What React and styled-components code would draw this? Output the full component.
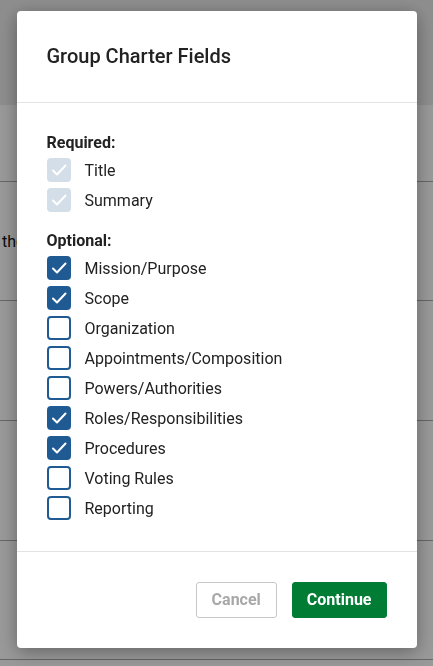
import styled, { createGlobalStyle } from 'styled-components'

const GlobalStyle = createGlobalStyle`
	html, body {
		margin: 0;
		padding: 0;
		font-family: Roboto, "Liberation Sans", sans-serif;
		color: #222;
		background: #fff;
	}
`

const Page = styled.div`
	height: 666px;
	overflow: hidden;
`
const TopBar = styled.div`
	height: 105px;
	background-color: #ececec;
`
const Row = styled.div`
	height: ${(p) => p.$height}px;
	border-bottom: 1px solid #aaa;
	display: flex;
	align-items: center;
	padding-left: 2px;
	font-size: 16px;
	color: #111;
`

const Overlay = styled.div`
	position: fixed;
	inset: 0;
	background-color: rgba(0, 0, 0, 0.4);
	display: flex;
	justify-content: center;
	align-items: flex-start;
	padding-top: 11px;
`
const Modal = styled.div`
	width: 400px;
	background: #fff;
	border-radius: 4px;
	box-shadow: 0 4px 18px rgba(0, 0, 0, 0.35);
`
const Header = styled.div`
	height: 92px;
	display: flex;
	align-items: center;
	padding: 0 30px;
	border-bottom: 1px solid #e3e3e3;
	box-sizing: border-box;
`
const Title = styled.h2`
	margin: 0 0 2px;
	font-size: 20px;
	font-weight: 500;
	color: #222;
`
const Body = styled.div`
	padding: 30px 30px 28px;
	border-bottom: 1px solid #e3e3e3;
`
const GroupLabel = styled.div`
	font-size: 16px;
	font-weight: 700;
	line-height: 20px;
	margin-top: ${(p) => (p.$first ? 0 : 16)}px;
	margin-bottom: 2px;
`
const Option = styled.label`
	display: flex;
	align-items: center;
	gap: 14px;
	height: 30px;
	font-size: 16px;
	color: #222;
`
const Box = styled.span`
	width: 24px;
	height: 24px;
	box-sizing: border-box;
	border-radius: 4px;
	display: flex;
	align-items: center;
	justify-content: center;
	background-color: ${(p) => (p.$disabled ? '#d3dee8' : p.$checked ? '#1f5a93' : '#fff')};
	border: 2px solid ${(p) => (p.$disabled ? '#d3dee8' : '#1f5a93')};
`
const Footer = styled.div`
	height: 96px;
	display: flex;
	justify-content: flex-end;
	align-items: center;
	gap: 15px;
	padding: 0 30px 1px;
	box-sizing: border-box;
`
const Button = styled.button`
	height: 36px;
	padding: 0 ${(p) => (p.$primary ? 14 : 15)}px;
	border-radius: 3px;
	font-family: Roboto, "Liberation Sans", sans-serif;
	font-size: 16px;
	font-weight: 700;
	border: 1px solid ${(p) => (p.$primary ? '#007c34' : '#c8c8c8')};
	background: ${(p) => (p.$primary ? '#007c34' : '#fff')};
	color: ${(p) => (p.$primary ? '#fff' : '#a8a8a8')};
`

const Check = () => (
	<svg width="18" height="18" viewBox="0 0 18 18" fill="none">
		<polyline points="3,9.5 7,13.5 15.5,4.5" stroke="#fff" strokeWidth="2" strokeLinecap="round" strokeLinejoin="round" />
	</svg>
)

const Checkbox = ({ label, checked, disabled }) => (
	<Option>
		<Box $checked={checked} $disabled={disabled}>
			{(checked || disabled) && <Check />}
		</Box>
		{label}
	</Option>
)

const required = ['Title', 'Summary']
const optional = [
	['Mission/Purpose', true],
	['Scope', true],
	['Organization', false],
	['Appointments/Composition', false],
	['Powers/Authorities', false],
	['Roles/Responsibilities', true],
	['Procedures', true],
	['Voting Rules', false],
	['Reporting', false],
]

const App = () => (
	<>
		<GlobalStyle />
		<Page>
			<TopBar />
			<Row $height={76} />
			<Row $height={118}>the</Row>
			<Row $height={119} />
			<Row $height={119} />
			<Row $height={118} />
		</Page>
		<Overlay>
			<Modal>
				<Header>
					<Title>Group Charter Fields</Title>
				</Header>
				<Body>
					<GroupLabel $first>Required:</GroupLabel>
					{required.map((r) => (
						<Checkbox key={r} label={r} disabled />
					))}
					<GroupLabel>Optional:</GroupLabel>
					{optional.map(([label, checked]) => (
						<Checkbox key={label} label={label} checked={checked} />
					))}
				</Body>
				<Footer>
					<Button>Cancel</Button>
					<Button $primary>Continue</Button>
				</Footer>
			</Modal>
		</Overlay>
	</>
)

export default App
